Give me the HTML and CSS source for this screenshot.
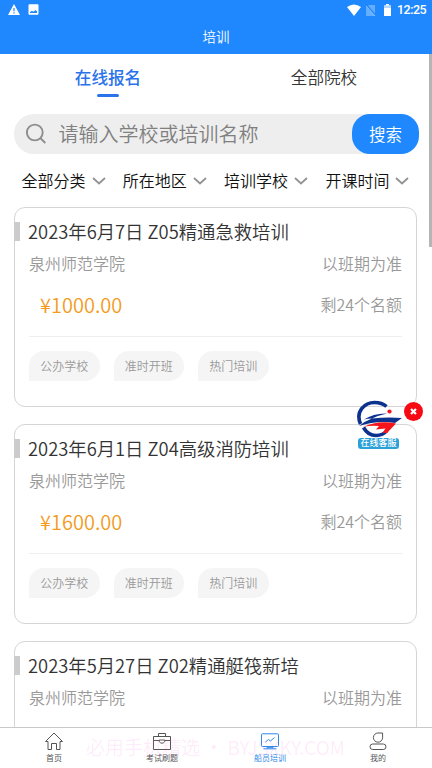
FILE: index.html
```html
<!DOCTYPE html>
<html lang="zh-CN">
<head>
<meta charset="utf-8">
<title>培训</title>
<link rel="stylesheet" href="styles.css">
</head>
<body>
<div class="app">
  <header class="header">
    <div class="status">
      <svg class="status-left" width="32" height="12" viewBox="0 0 32 12"><path fill="#fff" fill-rule="evenodd" d="M6 0 12 11H0ZM5.4 4V7.200H6.600V4ZM5.400 8.200V9.400H6.600V8.200ZM21.500.2h8a1 1 0 0 1 1 1v8.600a1 1 0 0 1-1 1h-8a1 1 0 0 1-1-1V1.200a1 1 0 0 1 1-1ZM22 9h7V7.200l-1.700-1.200-1.800 1.700-1.500-1-2 1.300Z"/></svg>
      <div class="status-right">
        <svg width="45" height="13" viewBox="0 0 45 13"><path fill="#fff" d="M0 3Q7-2 14 3L7 12Z"/><path fill="#64aefc" d="M22 1h6v11h-9V4Z"/><path stroke="#1f88fe" stroke-width="2" d="m19 1 10 11"/><path stroke="#9acaff" d="m19 2 9 10"/><path fill="#fff" d="M39 0h3v1.500h2V12h-7V1.500h2Z"/><path fill="#b6d8ff" d="M37 1.500h7V4h-7Z"/></svg>
        <span>12:25</span>
      </div>
    </div>
    <h1>培训</h1>
  </header>
  <nav class="tabs"><a class="active">在线报名</a><a>全部院校</a></nav>
  <div class="search">
    <svg width="22" height="22" viewBox="0 0 22 22" fill="none" stroke="#8e8e8e" stroke-width="1.900"><circle cx="8.800" cy="9.500" r="7.900"/><path d="m14.300 15 5 5"/></svg>
    <span class="placeholder">请输入学校或培训名称</span>
    <button>搜索</button>
  </div>
  <div class="filters">
    <div>全部分类<svg viewBox="0 0 14 8"><path d="m1 1 6 5.500L13 1"/></svg></div>
    <div>所在地区<svg viewBox="0 0 14 8"><path d="m1 1 6 5.500L13 1"/></svg></div>
    <div>培训学校<svg viewBox="0 0 14 8"><path d="m1 1 6 5.500L13 1"/></svg></div>
    <div>开课时间<svg viewBox="0 0 14 8"><path d="m1 1 6 5.500L13 1"/></svg></div>
  </div>
  <main class="list">
    <article class="card">
      <h2>2023年6月7日 Z05精通急救培训</h2>
      <div class="row school"><span>泉州师范学院</span><span>以班期为准</span></div>
      <div class="row quota"><span class="price">¥1000.00</span><span>剩24个名额</span></div>
      <div class="tags"><span>公办学校</span><span>准时开班</span><span>热门培训</span></div>
    </article>
    <article class="card">
      <h2>2023年6月1日 Z04高级消防培训</h2>
      <div class="row school"><span>泉州师范学院</span><span>以班期为准</span></div>
      <div class="row quota"><span class="price">¥1600.00</span><span>剩24个名额</span></div>
      <div class="tags"><span>公办学校</span><span>准时开班</span><span>热门培训</span></div>
    </article>
    <article class="card">
      <h2>2023年5月27日 Z02精通艇筏新培</h2>
      <div class="row school"><span>泉州师范学院</span><span>以班期为准</span></div>
    </article>
  </main>
  <footer class="tabbar">
    <a><svg viewBox="0 0 20 20"><path d="M1.500 10.500 10 2l8.500 8.500H16V18.500h-3.500v-6h-5v6H4v-8Z"/></svg>首页</a>
    <a><svg viewBox="0 0 20 20"><path d="M1.500 5.500h17v13h-17ZM6.500 5.500v-3h7v3M1.500 9.500h5.700m5.600 0h5.700M7.200 9v1.500Q10 14 12.800 10.500V9Z"/></svg>考试刷题</a>
    <a class="current"><svg viewBox="0 0 20 20"><rect x="1.500" y="2.800" width="17" height="12.700" rx="1"/><path d="M7 15.500v1.200h6v-1.200M3.500 17.800h13M5.500 11l3-2.500 2 1.500 4-3.500"/></svg>船员培训</a>
    <a><svg viewBox="0 0 20 20"><path d="M10 2h4.600v4.800A4.600 4.600 0 1 1 10 2Z"/><rect x="2" y="13" width="16" height="5.500" rx="2.750"/></svg>我的</a>
  </footer>
  <div class="watermark">必用手机精选 · BYJSXKY.COM</div>
  <div class="service">
    <svg width="48" height="38" viewBox="0 0 48 38"><g fill="none" stroke="#0d318f" stroke-width="3.600"><path d="M4.500 24C-1 11 9 2.500 18.500 2.500Q26 2.500 30.500 6.500"/><path d="M7.500 27.500Q12 35.500 20 35.500Q27 35.500 31 30.500"/></g><path fill="#0d318f" d="M8 19.500Q18 13 31 13.500Q22 15.500 16 18.500Q30 17 46 18L39 23Q22 20 3 26Q9 21 16 18.500Q12 18.500 8 19.500Z"/><path fill="#f5141b" d="M7 27Q22 20 40 23.500L31 33H26.500L29.500 28.500L20 29.500L23 26Q15 25 7 27Z"/><circle cx="33.500" cy="11.500" r="2.100" fill="#f5141b"/></svg>
    <span>在线客服</span>
  </div>
  <div class="close"><svg width="7" height="7" viewBox="0 0 7 7"><path stroke="#fff" stroke-width="2.200" d="m1 1 5 5m0-5-5 5"/></svg></div>
  <div class="scrollbar"></div>
</div>
</body>
</html>
```
FILE: styles.css
```css
* { box-sizing: border-box; }
body { margin: 0; background: #fff; font-family: "Noto Sans CJK SC", sans-serif; font-weight: 350; color: #333; }
.app { position: relative; height: 768px; overflow: hidden; display: flex; flex-direction: column; }
.header { height: 54px; flex: none; background: #1f88fe; color: #fff; }
.status { height: 20px; display: flex; justify-content: space-between; align-items: center; padding: 0 6px 0 8px; }
.status-left { display: block; }
.status-right { display: flex; align-items: center; gap: 5px; font: 500 12.500px/20px Roboto, sans-serif; }
.status-right span { width: 29px; letter-spacing: -.5px; }
h1 { margin: 0; text-align: center; font-weight: 350; font-size: 13.500px; line-height: 33px; }
.tabs { height: 60px; flex: none; display: flex; font-size: 16.600px; line-height: 46px; }
.tabs a { flex: 1; display: flex; flex-direction: column; align-items: center; }
.tabs .active { color: #2b73eb; font-weight: 500; }
.active::after { content: ""; width: 22px; height: 3px; border-radius: 2px; background: #2b73eb; margin-top: -6px; }
.search { height: 40px; flex: none; margin: 0 13px 0 14px; padding-left: 12px; border-radius: 20px; background: #eee; display: flex; align-items: center; }
.placeholder { flex: 1; margin-left: 10.500px; font-size: 20px; line-height: 40px; color: #808080; white-space: nowrap; }
button { width: 67px; height: 40px; padding: 0; border: 0; border-radius: 18px; background: #1f88fe; color: #fff; font: 350 16.500px/38px "Noto Sans CJK SC", sans-serif; }
.filters { height: 53px; flex: none; display: flex; padding-left: 12.500px; color: #111; font-size: 16px; line-height: 53px; }
.filters div { width: 101.300px; padding-left: 9px; display: flex; align-items: center; gap: 6px; white-space: nowrap; flex: none; }
.filters svg { width: 14px; height: 8px; fill: none; stroke: #929292; stroke-width: 1.800; }
.list { flex: 1; min-height: 0; overflow: hidden; padding: 0 15px 0 14px; }
.card { height: 200px; margin-bottom: 17px; border: 1px solid #d5d5d5; border-radius: 11px; padding: 14px 14px 0 0; }
h2 { margin: 0 0 0 -1px; height: 19px; padding-left: 8px; border-left: 6px solid #ccc; font-weight: 350; font-size: 18.350px; line-height: 19px; white-space: nowrap; }
.row { display: flex; justify-content: space-between; align-items: center; color: #999; font-size: 16px; }
.school { height: 34px; margin-top: 5px; padding-left: 14px; }
.quota { height: 57px; margin-left: 14px; padding: 0 0 8px 11px; border-bottom: 1px solid #eee; }
.price { font-size: 20px; color: #f39b1d; }
.tags { display: flex; gap: 14px; padding: 14px 0 0 14px; }
.tags span { width: 70.500px; height: 30px; border-radius: 15px 15px 15px 0; background: #f5f5f5; color: #999; font-size: 12px; line-height: 29px; text-align: center; }
.tabbar { height: 41px; flex: none; border-top: 1px solid #c9c9c9; background: #fff; display: flex; }
.tabbar a { flex: 1; display: flex; flex-direction: column; align-items: center; padding-top: 3px; color: #555; font-size: 8px; font-weight: 400; line-height: 14px; }
.tabbar svg { width: 20px; height: 20px; fill: none; stroke: currentColor; stroke-width: 1; }
.tabbar .current { color: #2d87ec; }
.watermark { position: absolute; left: 86px; top: 734px; color: rgba(255, 110, 220, .14); font-size: 19px; line-height: 26px; white-space: nowrap; }
.service { position: absolute; left: 356px; top: 400px; width: 48px; height: 50px; }
.service svg { display: block; }
.service span { position: absolute; left: 2px; top: 38px; width: 41px; height: 11px; border-radius: 3px; background: #2ba1d8; color: #fff; font-size: 9px; font-weight: 500; line-height: 10px; text-align: center; }
.close { position: absolute; left: 404px; top: 402px; width: 19px; height: 19px; border-radius: 50%; background: #f60912; display: flex; align-items: center; justify-content: center; }
.scrollbar { position: absolute; right: 0; top: 54px; width: 3px; height: 193px; background: #b5b5b5; }
```
